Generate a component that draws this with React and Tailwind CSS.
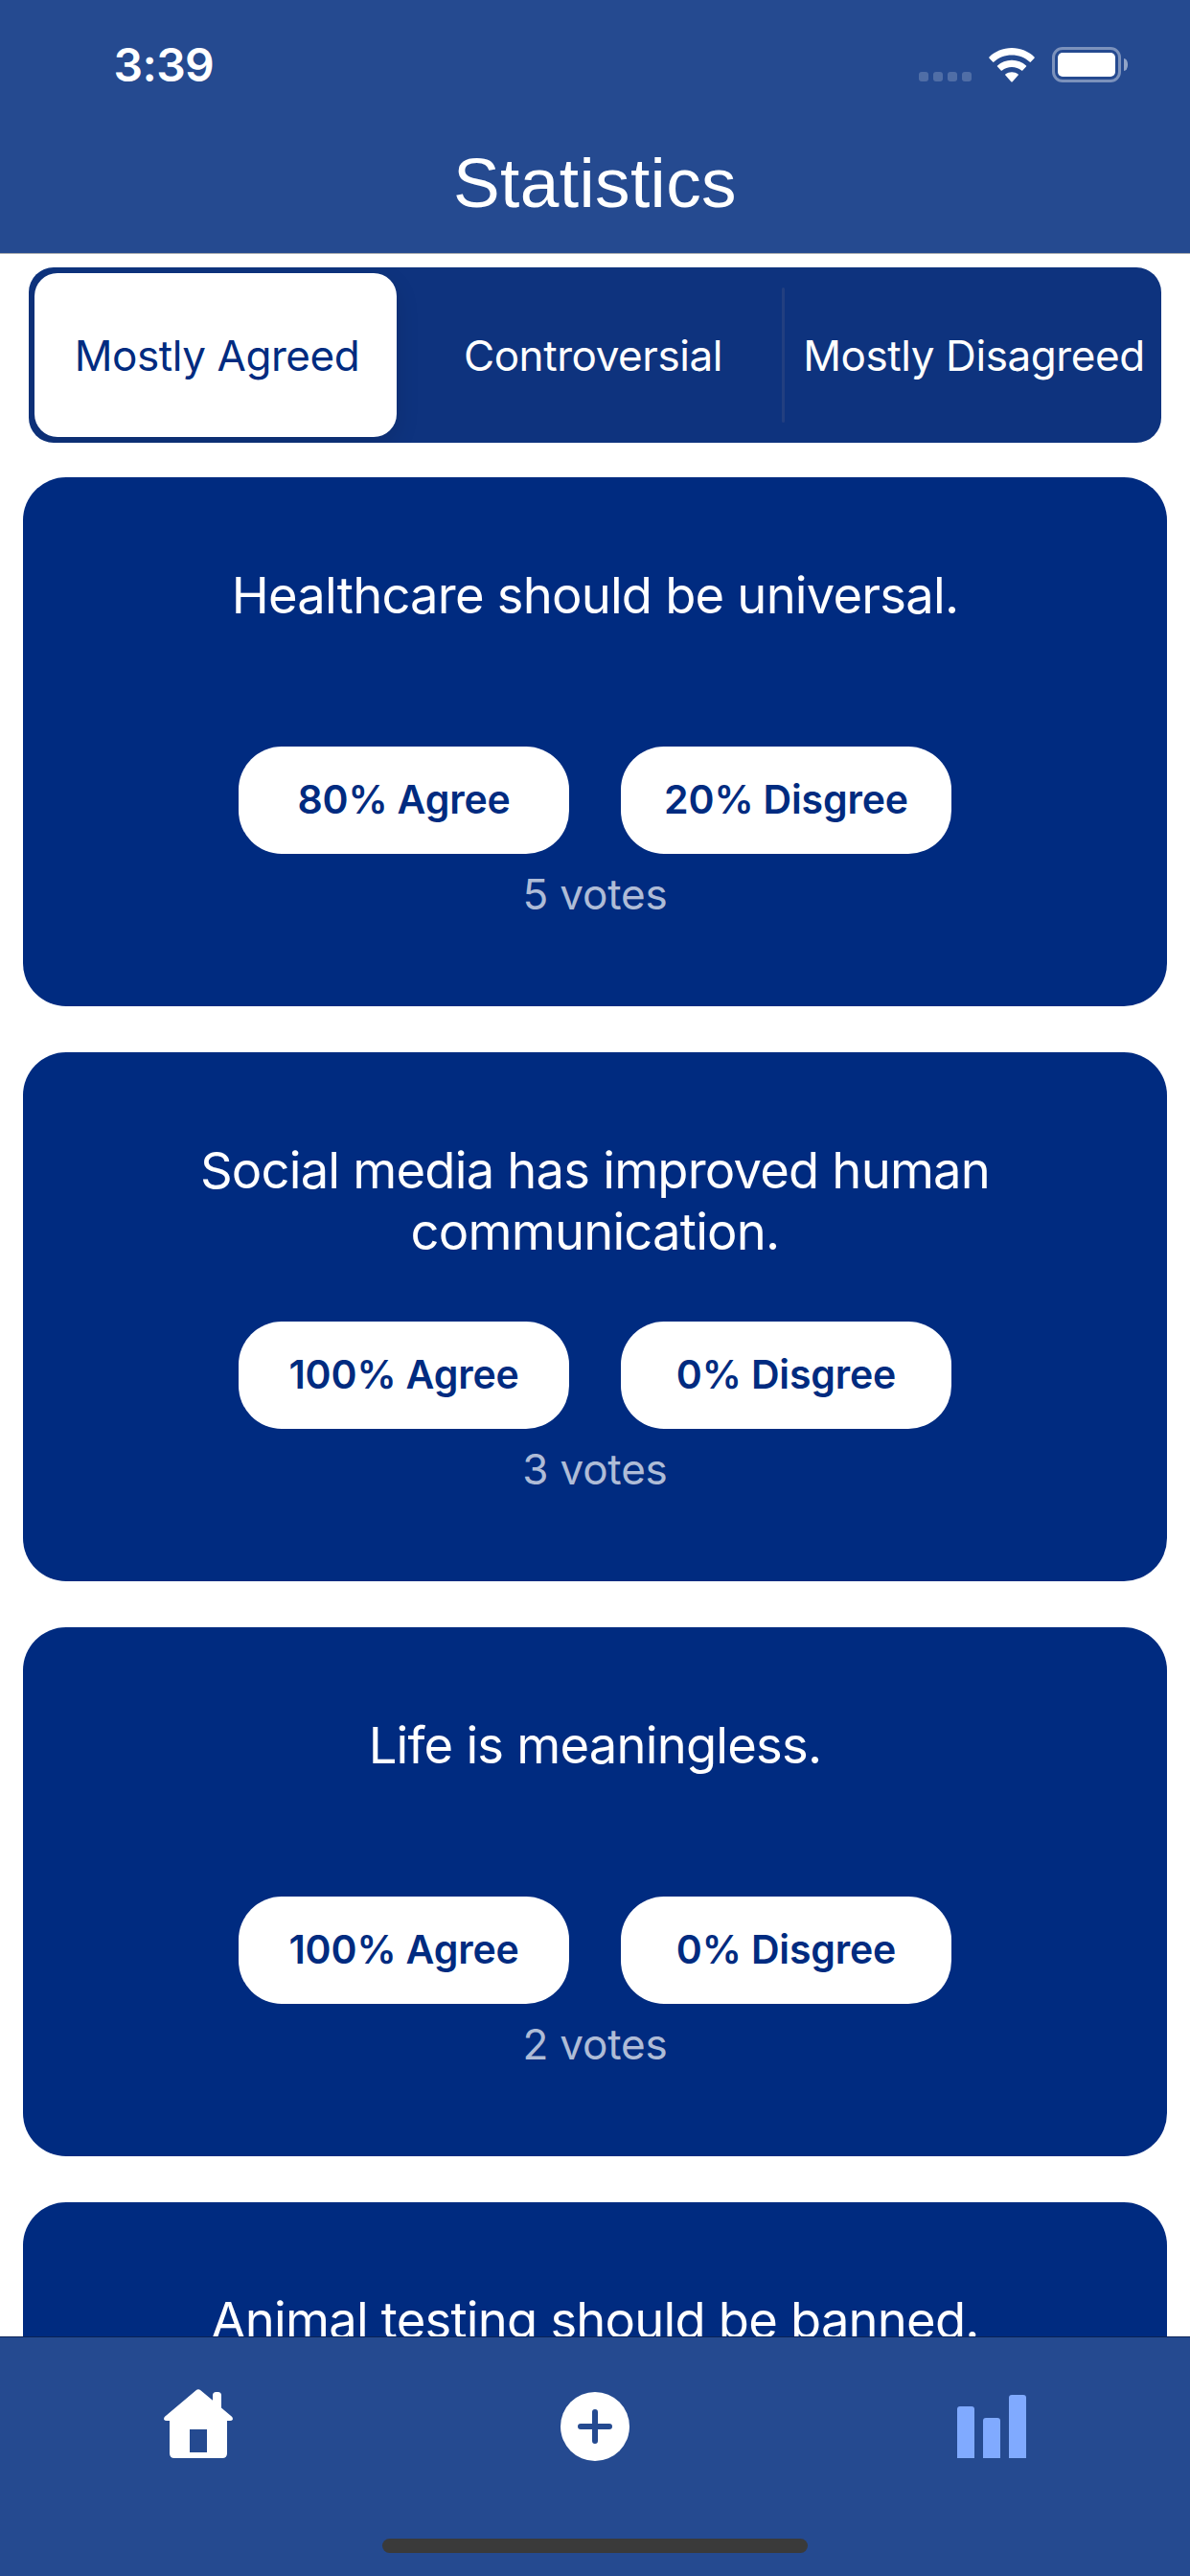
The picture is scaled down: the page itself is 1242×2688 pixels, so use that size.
const TABS = ["Mostly Agreed", "Controversial", "Mostly Disagreed"];

const QUESTIONS = [
  { text: "Healthcare should be universal.", agree: 80, disagree: 20, votes: 5 },
  { text: "Social media has improved human communication.", agree: 100, disagree: 0, votes: 3 },
  { text: "Life is meaningless.", agree: 100, disagree: 0, votes: 2 },
  { text: "Animal testing should be banned." },
];

function SignalDots() {
  return (
    <div className="mb-px flex gap-[5px]">
      {[0, 1, 2, 3].map((i) => (
        <span key={i} className="size-2.5 rounded-[3px] bg-white/20" />
      ))}
    </div>
  );
}

function WifiIcon() {
  return (
    <svg width="48" height="37" viewBox="0 0 48 37" fill="#fff">
      <path d="M24 1C14.8 1 6.4 4.6 0.5 10.4Q-0.1 11 0.5 11.7L4.1 15.6Q4.7 16.2 5.4 15.6C10.3 11.2 16.8 8.6 24 8.6C31.2 8.6 37.7 11.2 42.6 15.6Q43.3 16.2 43.9 15.6L47.5 11.7Q48.1 11 47.5 10.4C41.6 4.6 33.2 1 24 1Z" />
      <path d="M24 13.8C18.2 13.8 13 15.9 9 19.4Q8.4 20 9 20.6L12.7 24.5Q13.3 25.1 13.9 24.6C16.6 22.4 20.1 21 24 21C27.9 21 31.4 22.4 34.1 24.6Q34.7 25.1 35.3 24.5L39 20.6Q39.6 20 39 19.4C35 15.9 29.8 13.8 24 13.8Z" />
      <path d="M24 26.2C21.5 26.2 19.3 27 17.5 28.3Q16.9 28.9 17.4 29.5L23.3 36.2Q24 36.9 24.7 36.2L30.6 29.5Q31.1 28.9 30.5 28.3C28.7 27 26.5 26.2 24 26.2Z" />
    </svg>
  );
}

function BatteryIcon() {
  return (
    <div className="flex items-center gap-[3px]">
      <div className="h-[37px] w-[72px] rounded-[11px] border-3 border-white/40 p-[3px]">
        <div className="h-full rounded-[5px] bg-white" />
      </div>
      <div className="h-[13px] w-1 rounded-r-[4px_6px] bg-white/50" />
    </div>
  );
}

function Header() {
  return (
    <header className="h-[265px] shrink-0 border-b border-[#a8abb0] bg-[#254a90] text-white">
      <div className="flex h-[149px] items-start justify-between pt-[38px] pr-[65px] pl-[118.5px]">
        <span className="text-[48px] leading-[60px] font-semibold tracking-[-0.6px]">3:39</span>
        <div className="flex h-12 items-end gap-[18px]">
          <SignalDots />
          <WifiIcon />
          <BatteryIcon />
        </div>
      </div>
      <h1 className="text-center font-['Liberation_Sans',Arial,sans-serif] text-[73px] leading-[84px] tracking-[0.4px]">
        Statistics
      </h1>
    </header>
  );
}

function SegmentedControl() {
  return (
    <div className="mx-[30px] mt-[14px] flex h-[183px] shrink-0 items-center overflow-hidden rounded-[26px] bg-[#0e337e] p-1.5 text-[44px] tracking-[-0.42px] text-white">
      <div className="flex h-[171px] w-[378px] items-center justify-center rounded-[24px] bg-white pl-[3px] text-[#002b80] shadow-[0_9px_24px_rgba(0,0,0,0.12)]">
        {TABS[0]}
      </div>
      <div className="flex h-[141px] flex-1 items-center justify-center pl-2">{TABS[1]}</div>
      <div className="h-[141px] w-[3px] rounded-full bg-[#223f80]" />
      <div className="flex h-[141px] w-[387px] items-center justify-center pl-2 whitespace-nowrap">{TABS[2]}</div>
    </div>
  );
}

function Pill({ children }) {
  return (
    <div className="flex h-28 w-[345px] items-center justify-center rounded-[45px] bg-white text-[41px] font-semibold tracking-[-0.15px] text-[#002b80]">
      {children}
    </div>
  );
}

function Results({ agree, disagree, votes }) {
  return (
    <>
      <div className="mt-[62px] flex gap-[54px]">
        <Pill>{agree}% Agree</Pill>
        <Pill>{disagree}% Disgree</Pill>
      </div>
      <p className="mt-[15px] text-[44px] leading-[54px] tracking-[-0.2px] text-white/70">{votes} votes</p>
    </>
  );
}

function QuestionCard({ text, ...results }) {
  return (
    <article className="flex h-[552px] shrink-0 flex-col items-center rounded-[45px] bg-[#002b80] pt-[91px] text-center text-white">
      <h2 className="h-32 w-[880px] text-[52.5px] leading-[64px] tracking-[-0.78px]">{text}</h2>
      {results.votes !== undefined && <Results {...results} />}
    </article>
  );
}

function HomeIcon() {
  return (
    <svg width="72" height="76" viewBox="0 0 72 76" fill="#fff">
      <path
        fillRule="evenodd"
        d="M33.6 4.2Q36 2.2 38.4 4.2L51 14.8V9.5Q51 6 54.5 6H56.5Q60 6 60 9.5V22.4L71 31.8Q72.4 33.5 71.7 35Q71 36 69 36H66V70Q66 75 61 75H11Q6 75 6 70V36H3Q1 36 0.3 35Q-0.4 33.5 1 31.8ZM27 45V69H45V45Z"
      />
    </svg>
  );
}

function PlusIcon() {
  return (
    <svg width="72" height="72" viewBox="0 0 72 72">
      <circle cx="36" cy="36" r="36" fill="#fff" />
      <path d="M36 21V51M21 36H51" stroke="#254a90" strokeWidth="6" strokeLinecap="round" />
    </svg>
  );
}

function ChartIcon() {
  return (
    <div className="flex h-[66px] items-end gap-[9px]">
      <span className="h-[54px] w-[18px] rounded-t-[3px] bg-[#80aaff]" />
      <span className="h-[42px] w-[18px] rounded-t-[3px] bg-[#80aaff]" />
      <span className="h-[66px] w-[18px] rounded-t-[3px] bg-[#80aaff]" />
    </div>
  );
}

function TabBar() {
  return (
    <nav className="flex h-[250px] shrink-0 flex-col items-center justify-between border-t border-[#0b2255] bg-[#254a90] pb-6">
      <div className="grid w-full grid-cols-3 pt-[51px]">
        <div className="flex justify-center">
          <HomeIcon />
        </div>
        <div className="flex justify-center pt-[6px]">
          <PlusIcon />
        </div>
        <div className="flex justify-center pt-[9px]">
          <ChartIcon />
        </div>
      </div>
      <div className="h-[15px] w-[444px] rounded-full bg-[#3a3a3a]" />
    </nav>
  );
}

export default function App() {
  return (
    <div className="flex h-[2688px] w-[1242px] flex-col overflow-hidden bg-white font-[Inter,'Noto_Sans',sans-serif]">
      <Header />
      <SegmentedControl />
      <main className="flex min-h-0 flex-1 flex-col gap-12 overflow-hidden px-6 pt-9">
        {QUESTIONS.map((q) => (
          <QuestionCard key={q.text} {...q} />
        ))}
      </main>
      <TabBar />
    </div>
  );
}
